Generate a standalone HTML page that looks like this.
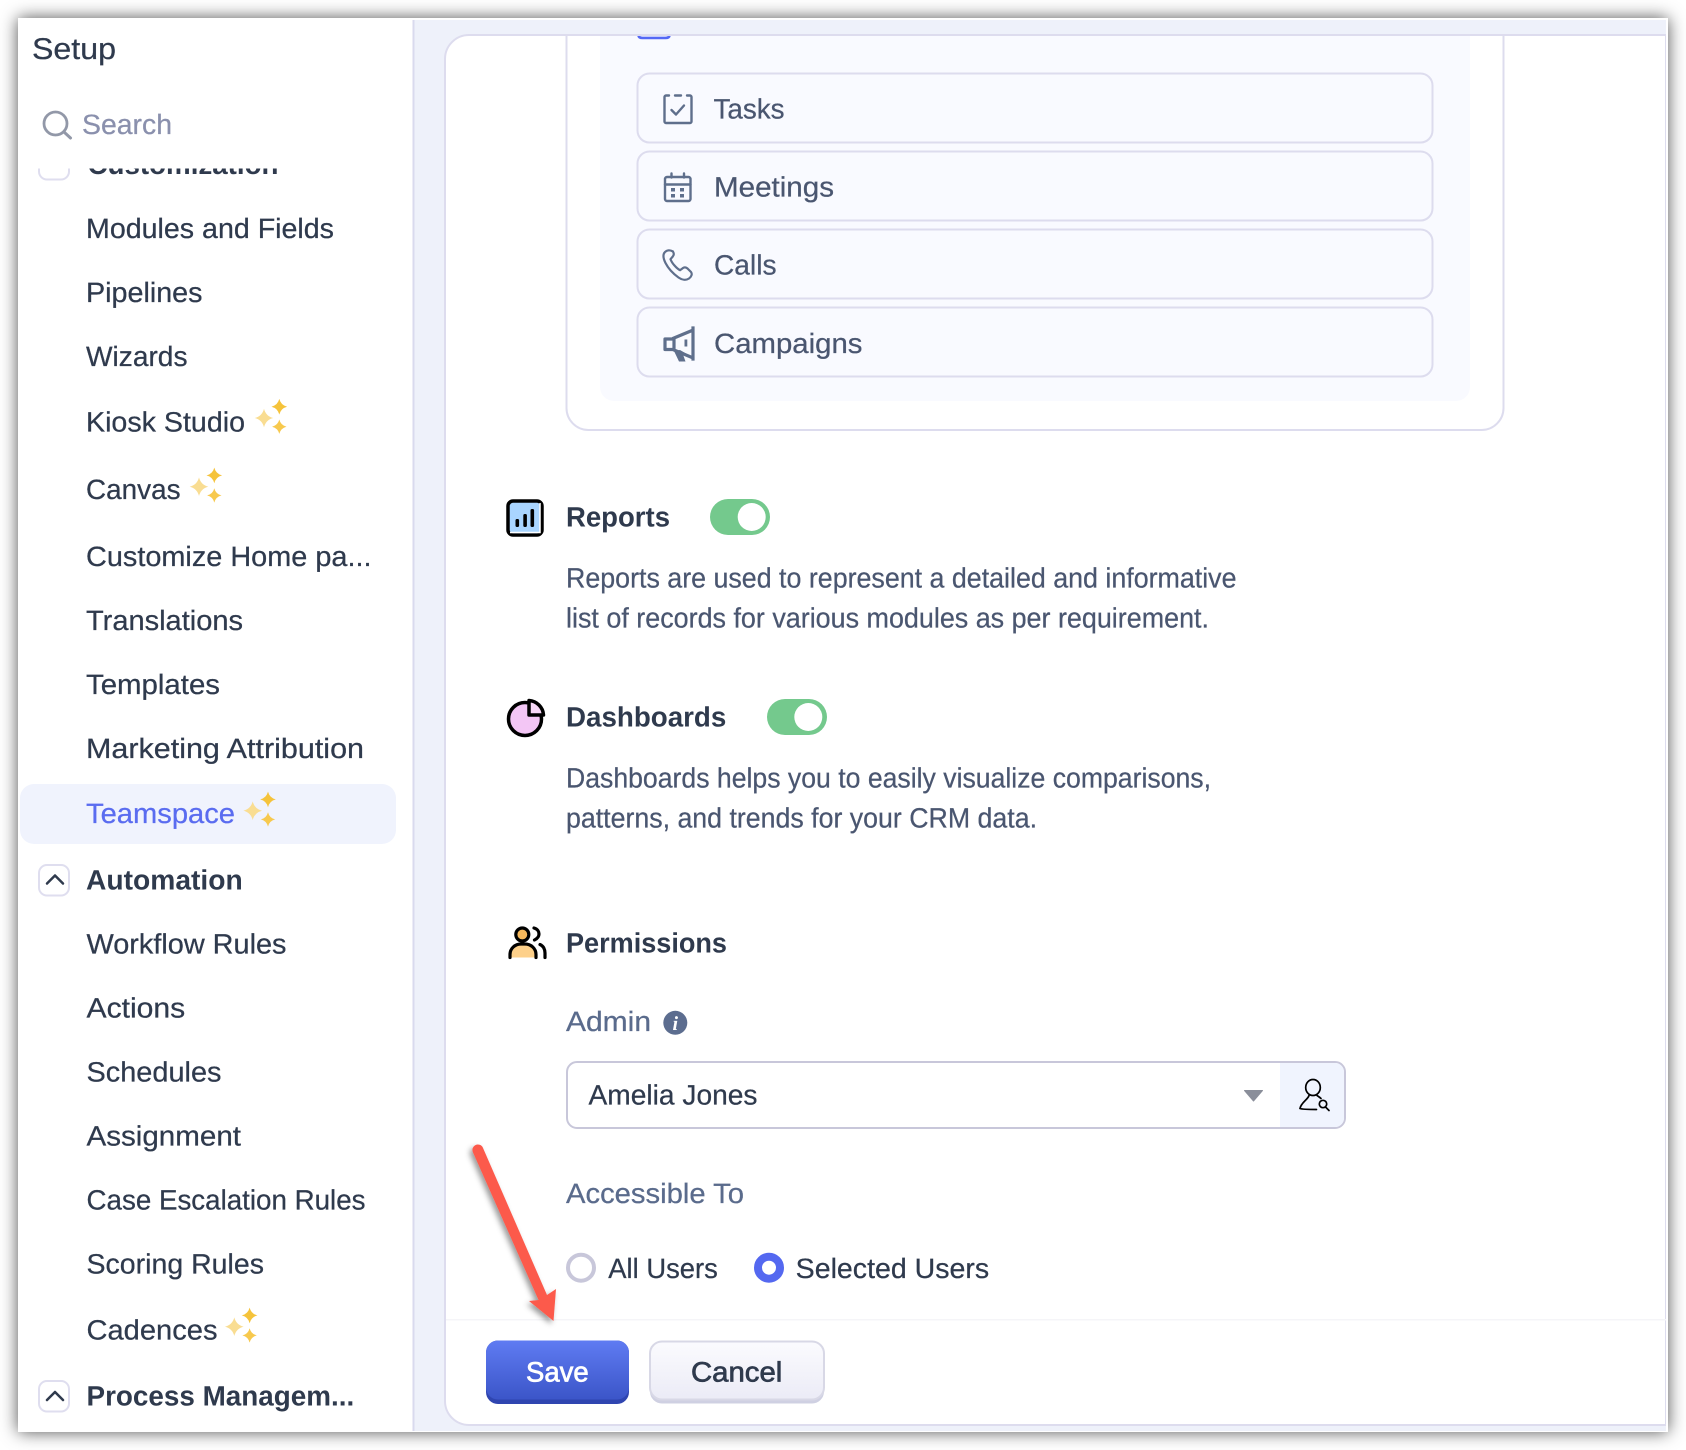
<!DOCTYPE html>
<html><head><meta charset="utf-8"><title>Setup</title>
<style>
html,body{margin:0;padding:0;background:#fff;width:1686px;height:1450px;overflow:hidden}
#w{position:absolute;left:18px;top:18px;width:1650px;height:1414px;background:#fff;box-shadow:0 0 16px rgba(0,0,0,.68)}
svg{position:absolute;left:0;top:0;filter:blur(.3px)}
text{font-family:"Liberation Sans",sans-serif;font-size:28px;color:#2f3a4d;fill:currentColor;stroke:currentColor;stroke-width:.25px;text-rendering:geometricPrecision}
.b{font-weight:700;stroke-width:0}
.m{stroke-width:.7px}
.d{color:#4a5670}
.l{color:#5a6b8c}
</style></head><body>
<div id="w"></div>
<svg width="1686" height="1450" viewBox="0 0 1686 1450">
<defs>
<clipPath id="side"><rect x="18" y="168.500" width="394" height="1263.500"/></clipPath>
<clipPath id="main"><rect x="445" y="36" width="1221" height="400"/></clipPath>
<path id="s" d="M0-1Q.2-.2 1 0 .2.2 0 1-.2.2-1 0-.2-.2 0-1Z"/>
<g id="st"><use href="#s" transform="scale(9.300)" fill="#f9dd92"/><use href="#s" transform="translate(15.300 -11.300) scale(7.800)" fill="#f5c33b"/><use href="#s" transform="translate(15.300 8.700) scale(7.200)" fill="#f7c94e"/></g>
<filter id="ash" x="-30%" y="-10%" width="160%" height="120%"><feDropShadow dx="-2.500" dy="3" stdDeviation="3" flood-color="#000" flood-opacity=".4"/></filter>
</defs>

<!-- main background -->
<rect x="414" y="20" width="1252" height="1411" fill="#eef1fa"/>
<rect x="412.5" y="20" width="2" height="1411" fill="#d9daee"/>
<path d="M1666 35H469a24 24 0 0 0-24 24V1401a24 24 0 0 0 24 24H1666Z" fill="#fff" stroke="#dddcee" stroke-width="2"/>
<rect x="1666" y="20" width="2" height="1412" fill="#fff"/>

<!-- Module card -->
<g clip-path="url(#main)">
<rect x="566.5" y="-20" width="937" height="450" rx="22" fill="#fff" stroke="#dddcee" stroke-width="2"/>
<rect x="600" y="-20" width="870" height="421" rx="14" fill="#f9faff"/>
<path d="M638.5 34v1q0 3 4 3h23q4 0 4-3v-1" fill="#e9ecff" stroke="#5468f5" stroke-width="2.600"/>
</g>
<g fill="#f9faff" stroke="#dddcee" stroke-width="2">
<rect x="637.5" y="73.5" width="795" height="69" rx="12"/>
<rect x="637.5" y="151.5" width="795" height="69" rx="12"/>
<rect x="637.5" y="229.5" width="795" height="69" rx="12"/>
<rect x="637.5" y="307.5" width="795" height="69" rx="12"/>
</g>
<!-- row icons -->
<g fill="none" stroke="#5f6f8c" stroke-width="2.400" stroke-linecap="round" stroke-linejoin="round">
<path d="M669 95.500h-3a1.500 1.500 0 0 0-1.500 1.500v24.500a1.500 1.500 0 0 0 1.500 1.500h24a1.500 1.500 0 0 0 1.500-1.500V97a1.500 1.500 0 0 0-1.500-1.500h-3M675 95.500h6"/>
<path d="M671.500 110l4.500 4.500 8-9"/>
<rect x="665" y="177" width="25.500" height="24" rx="2"/>
<path d="M665 184.500h25.500M671.500 173.500v4M684 173.500v4"/>
<path d="M673 251.500c-3-1.800-6-1.500-8 .5-2.500 2.500-2 6 .5 11 2.800 5.500 7.500 10.500 13 14.500 3.500 2.500 7.500 3 10.500 1 2.500-1.800 3.500-4.500 2-6.500l-3.500-3.500c-1.500-1.300-3.300-1.300-4.800-.3l-2.700 2c-3.500-1.800-8-7-9.500-11l2.300-2.700c1.200-1.500 1.200-3.300.2-4.800Z" stroke-width="2.200"/>
<path d="M693 328v31M674 338l18-7.500M674 350l18 7.500M665 339h9v10.500h-9Z" stroke-linecap="square" stroke-width="3.200"/>
</g>
<g fill="#5f6f8c">
<rect x="671" y="188" width="4" height="3.500"/><rect x="680" y="188" width="4" height="3.500"/>
<rect x="671" y="194" width="4" height="3.500"/><rect x="680" y="194" width="4" height="3.500"/>
<rect x="684.500" y="339.500" width="2.800" height="7"/>
<path d="M674 351l5 10.500h6.500l-2.500-7 4 2-1-3-6-3.500Z"/>
</g>
<text x="713.500" y="118.700" class="d" textLength="71" lengthAdjust="spacingAndGlyphs">Tasks</text>
<text x="714" y="196.700" class="d" textLength="120" lengthAdjust="spacingAndGlyphs">Meetings</text>
<text x="714" y="274.700" class="d" textLength="62.500" lengthAdjust="spacingAndGlyphs">Calls</text>
<text x="714" y="353" class="d" textLength="148.500" lengthAdjust="spacingAndGlyphs">Campaigns</text>

<!-- Reports -->
<rect x="508" y="501" width="34" height="34" rx="5" fill="#a9d5ff" stroke="#000" stroke-width="3.500"/>
<path d="M510 532.500h30V503" fill="none" stroke="#fff" stroke-width="1.500"/>
<g fill="#000"><rect x="515.500" y="519" width="3.600" height="8" rx="1.500"/><rect x="523.300" y="514" width="3.600" height="13" rx="1.500"/><rect x="530.500" y="509" width="3.600" height="18" rx="1.500"/></g>
<text x="566" y="526.300" class="b" textLength="104" lengthAdjust="spacingAndGlyphs">Reports</text>
<rect x="710" y="499" width="60" height="36" rx="18" fill="#74c98d"/><circle cx="751.700" cy="517" r="14" fill="#fff"/>
<text x="566" y="587.700" class="d" textLength="670.500" lengthAdjust="spacingAndGlyphs">Reports are used to represent a detailed and informative</text>
<text x="566" y="627.300" class="d" textLength="643" lengthAdjust="spacingAndGlyphs">list of records for various modules as per requirement.</text>

<!-- Dashboards -->
<circle cx="525" cy="719" r="16.500" fill="#f3c6f5" stroke="#000" stroke-width="3.500"/>
<path d="M529 700.500a15.500 15.500 0 0 1 14.500 14.500H529Z" fill="#f8d8f8" stroke="#000" stroke-width="3.500" stroke-linejoin="round"/>
<text x="566" y="726.700" class="b" textLength="160.300" lengthAdjust="spacingAndGlyphs">Dashboards</text>
<rect x="767" y="699" width="60" height="36" rx="18" fill="#74c98d"/><circle cx="808.300" cy="717" r="14" fill="#fff"/>
<text x="566" y="787.700" class="d" textLength="645" lengthAdjust="spacingAndGlyphs">Dashboards helps you to easily visualize comparisons,</text>
<text x="566" y="827.700" class="d" textLength="471" lengthAdjust="spacingAndGlyphs">patterns, and trends for your CRM data.</text>

<!-- Permissions -->
<path d="M510 957.500v-3c0-6 5-10.500 11-10.500h4c6 0 11 4.500 11 10.500v3Z" fill="#fdd08a"/>
<path d="M510 957.500v-3c0-6 5-10.500 11-10.500h4c6 0 11 4.500 11 10.500v3" fill="none" stroke="#000" stroke-width="3.200" stroke-linecap="round"/>
<circle cx="522.300" cy="934.500" r="6.500" fill="#f7b95c" stroke="#000" stroke-width="3.200"/>
<path d="M534 928c3.500 1 5 3.500 5 6s-1.500 4.500-4.500 6M540 944.500c3.500 1.500 5 5 5 8.500v4.500" fill="none" stroke="#000" stroke-width="3.200" stroke-linecap="round"/>
<text x="566" y="952.600" class="b" textLength="161" lengthAdjust="spacingAndGlyphs">Permissions</text>

<text x="566" y="1031" class="l" textLength="85" lengthAdjust="spacingAndGlyphs">Admin</text>
<circle cx="675.300" cy="1022.800" r="12" fill="#5c6d8f"/>
<text x="675.300" y="1030" text-anchor="middle" style="font-family:'Liberation Serif',serif;font-size:20px;font-weight:700;font-style:italic;color:#fff;stroke-width:0">i</text>

<!-- Dropdown -->
<rect x="567" y="1062" width="778" height="66" rx="10" fill="#fff" stroke="#c8c7da" stroke-width="2"/>
<path d="M1280 1063h55a9 9 0 0 1 9 9v46a9 9 0 0 1-9 9h-55Z" fill="#f0f4fe"/>
<text x="588.500" y="1104.600" textLength="169" lengthAdjust="spacingAndGlyphs">Amelia Jones</text>
<path d="M1244.500 1090.500h18l-9 10.500Z" fill="#8a8e9a" stroke="#8a8e9a" stroke-width="1" stroke-linejoin="round"/>
<g fill="none" stroke="#000" stroke-width="1.700" stroke-linecap="round">
<ellipse cx="1313" cy="1087.500" rx="7.300" ry="8"/>
<path d="M1309 1095.500c-1 4-8 7-9 13 2.500 1 10 1 16.500 1M1317 1095.500c1.500 1 3 2 4 3"/>
<circle cx="1323" cy="1104" r="3.700"/>
<path d="M1325.500 1107l3.500 3.500"/>
</g>

<!-- Accessible -->
<text x="566" y="1202.800" class="l" textLength="178" lengthAdjust="spacingAndGlyphs">Accessible To</text>
<circle cx="581" cy="1267.700" r="13" fill="#fff" stroke="#c8c7da" stroke-width="4"/>
<text x="608.300" y="1278" textLength="109.500" lengthAdjust="spacingAndGlyphs">All Users</text>
<circle cx="769" cy="1267.700" r="11" fill="#fff" stroke="#5468f0" stroke-width="8"/>
<text x="795.700" y="1278" textLength="193.500" lengthAdjust="spacingAndGlyphs">Selected Users</text>

<!-- Footer -->
<rect x="446" y="1319" width="1220" height="1.500" fill="#f5f5f8"/>
<defs>
<linearGradient id="sv" x1="0" y1="0" x2="0" y2="1"><stop offset="0" stop-color="#5f7bf2"/><stop offset="1" stop-color="#3b55c8"/></linearGradient>
<linearGradient id="cn" x1="0" y1="0" x2="0" y2="1"><stop offset="0" stop-color="#fbfbfe"/><stop offset="1" stop-color="#ebebf6"/></linearGradient>
</defs>
<rect x="486" y="1340.500" width="143" height="63.500" rx="12" fill="#2f45b0"/>
<rect x="486" y="1340.500" width="143" height="59" rx="12" fill="url(#sv)"/>
<text x="526" y="1381.700" class="m" style="color:#fff" textLength="62.700" lengthAdjust="spacingAndGlyphs">Save</text>
<rect x="650" y="1341.500" width="174" height="62" rx="12" fill="#cfd0e2"/>
<rect x="650" y="1341.500" width="174" height="58" rx="12" fill="url(#cn)" stroke="#d8d8e6" stroke-width="2"/>
<text x="691" y="1381.700" class="m" textLength="91.300" lengthAdjust="spacingAndGlyphs">Cancel</text>

<!-- Sidebar -->
<text x="32" y="59" style="font-size:30px" textLength="84" lengthAdjust="spacingAndGlyphs">Setup</text>
<circle cx="55.500" cy="123.500" r="11.500" fill="none" stroke="#9298a8" stroke-width="2.800"/>
<path d="M64 132l6.500 6" fill="none" stroke="#9298a8" stroke-width="3" stroke-linecap="round"/>
<text x="82" y="134" style="color:#8a90ad" textLength="90" lengthAdjust="spacingAndGlyphs">Search</text>

<g clip-path="url(#side)">
<rect x="39" y="149" width="30" height="30.500" rx="8" fill="#fff" stroke="#dfdeef" stroke-width="2"/>
<text x="87.500" y="174" class="b" textLength="191" lengthAdjust="spacingAndGlyphs">Customization</text>
<rect x="20" y="784" width="376" height="60" rx="14" fill="#f0f3fd"/>
<text x="86" y="238" textLength="248" lengthAdjust="spacingAndGlyphs">Modules and Fields</text>
<text x="86" y="302" textLength="116.500" lengthAdjust="spacingAndGlyphs">Pipelines</text>
<text x="86" y="366" textLength="101.500" lengthAdjust="spacingAndGlyphs">Wizards</text>
<text x="86" y="431.700" textLength="159" lengthAdjust="spacingAndGlyphs">Kiosk Studio</text>
<text x="86" y="499" textLength="94.500" lengthAdjust="spacingAndGlyphs">Canvas</text>
<text x="86" y="566" textLength="285.500" lengthAdjust="spacingAndGlyphs">Customize Home pa...</text>
<text x="86" y="630" textLength="157" lengthAdjust="spacingAndGlyphs">Translations</text>
<text x="86" y="694" textLength="134" lengthAdjust="spacingAndGlyphs">Templates</text>
<text x="86" y="758" textLength="278" lengthAdjust="spacingAndGlyphs">Marketing Attribution</text>
<text x="86" y="823" style="color:#5a6cf0" textLength="149" lengthAdjust="spacingAndGlyphs">Teamspace</text>
<text x="86" y="889.300" class="b" textLength="156.700" lengthAdjust="spacingAndGlyphs">Automation</text>
<text x="86.500" y="953.500" textLength="200" lengthAdjust="spacingAndGlyphs">Workflow Rules</text>
<text x="86.500" y="1017.700" textLength="98.700" lengthAdjust="spacingAndGlyphs">Actions</text>
<text x="86.500" y="1081.700" textLength="135" lengthAdjust="spacingAndGlyphs">Schedules</text>
<text x="86.500" y="1145.700" textLength="154.500" lengthAdjust="spacingAndGlyphs">Assignment</text>
<text x="86.500" y="1209.700" textLength="279" lengthAdjust="spacingAndGlyphs">Case Escalation Rules</text>
<text x="86.500" y="1273.700" textLength="177.500" lengthAdjust="spacingAndGlyphs">Scoring Rules</text>
<text x="86.500" y="1339.300" textLength="131" lengthAdjust="spacingAndGlyphs">Cadences</text>
<text x="86.500" y="1405.500" class="b" textLength="267.700" lengthAdjust="spacingAndGlyphs">Process Managem...</text>
<use href="#st" transform="translate(264 418)"/>
<use href="#st" transform="translate(199 486.700)"/>
<use href="#st" transform="translate(252.700 810.700)"/>
<use href="#st" transform="translate(234.300 1326.700)"/>
<rect x="39" y="865" width="30" height="30.500" rx="8" fill="#fff" stroke="#dfdeef" stroke-width="2"/>
<path d="M47 883.500l8-8 8 8" fill="none" stroke="#2f3a4d" stroke-width="2.500" stroke-linecap="round" stroke-linejoin="round"/>
<rect x="39" y="1381" width="30" height="30.500" rx="8" fill="#fff" stroke="#dfdeef" stroke-width="2"/>
<path d="M47 1400l8-8 8 8" fill="none" stroke="#2f3a4d" stroke-width="2.500" stroke-linecap="round" stroke-linejoin="round"/>
</g>

<!-- Arrow -->
<path d="M473 1152.500a5.500 5.500 0 0 1 9.800-5L547 1295l9-6-2.500 32L529 1301l9.500-1Z" fill="#fc5a4c" filter="url(#ash)"/>
</svg>
</body></html>
